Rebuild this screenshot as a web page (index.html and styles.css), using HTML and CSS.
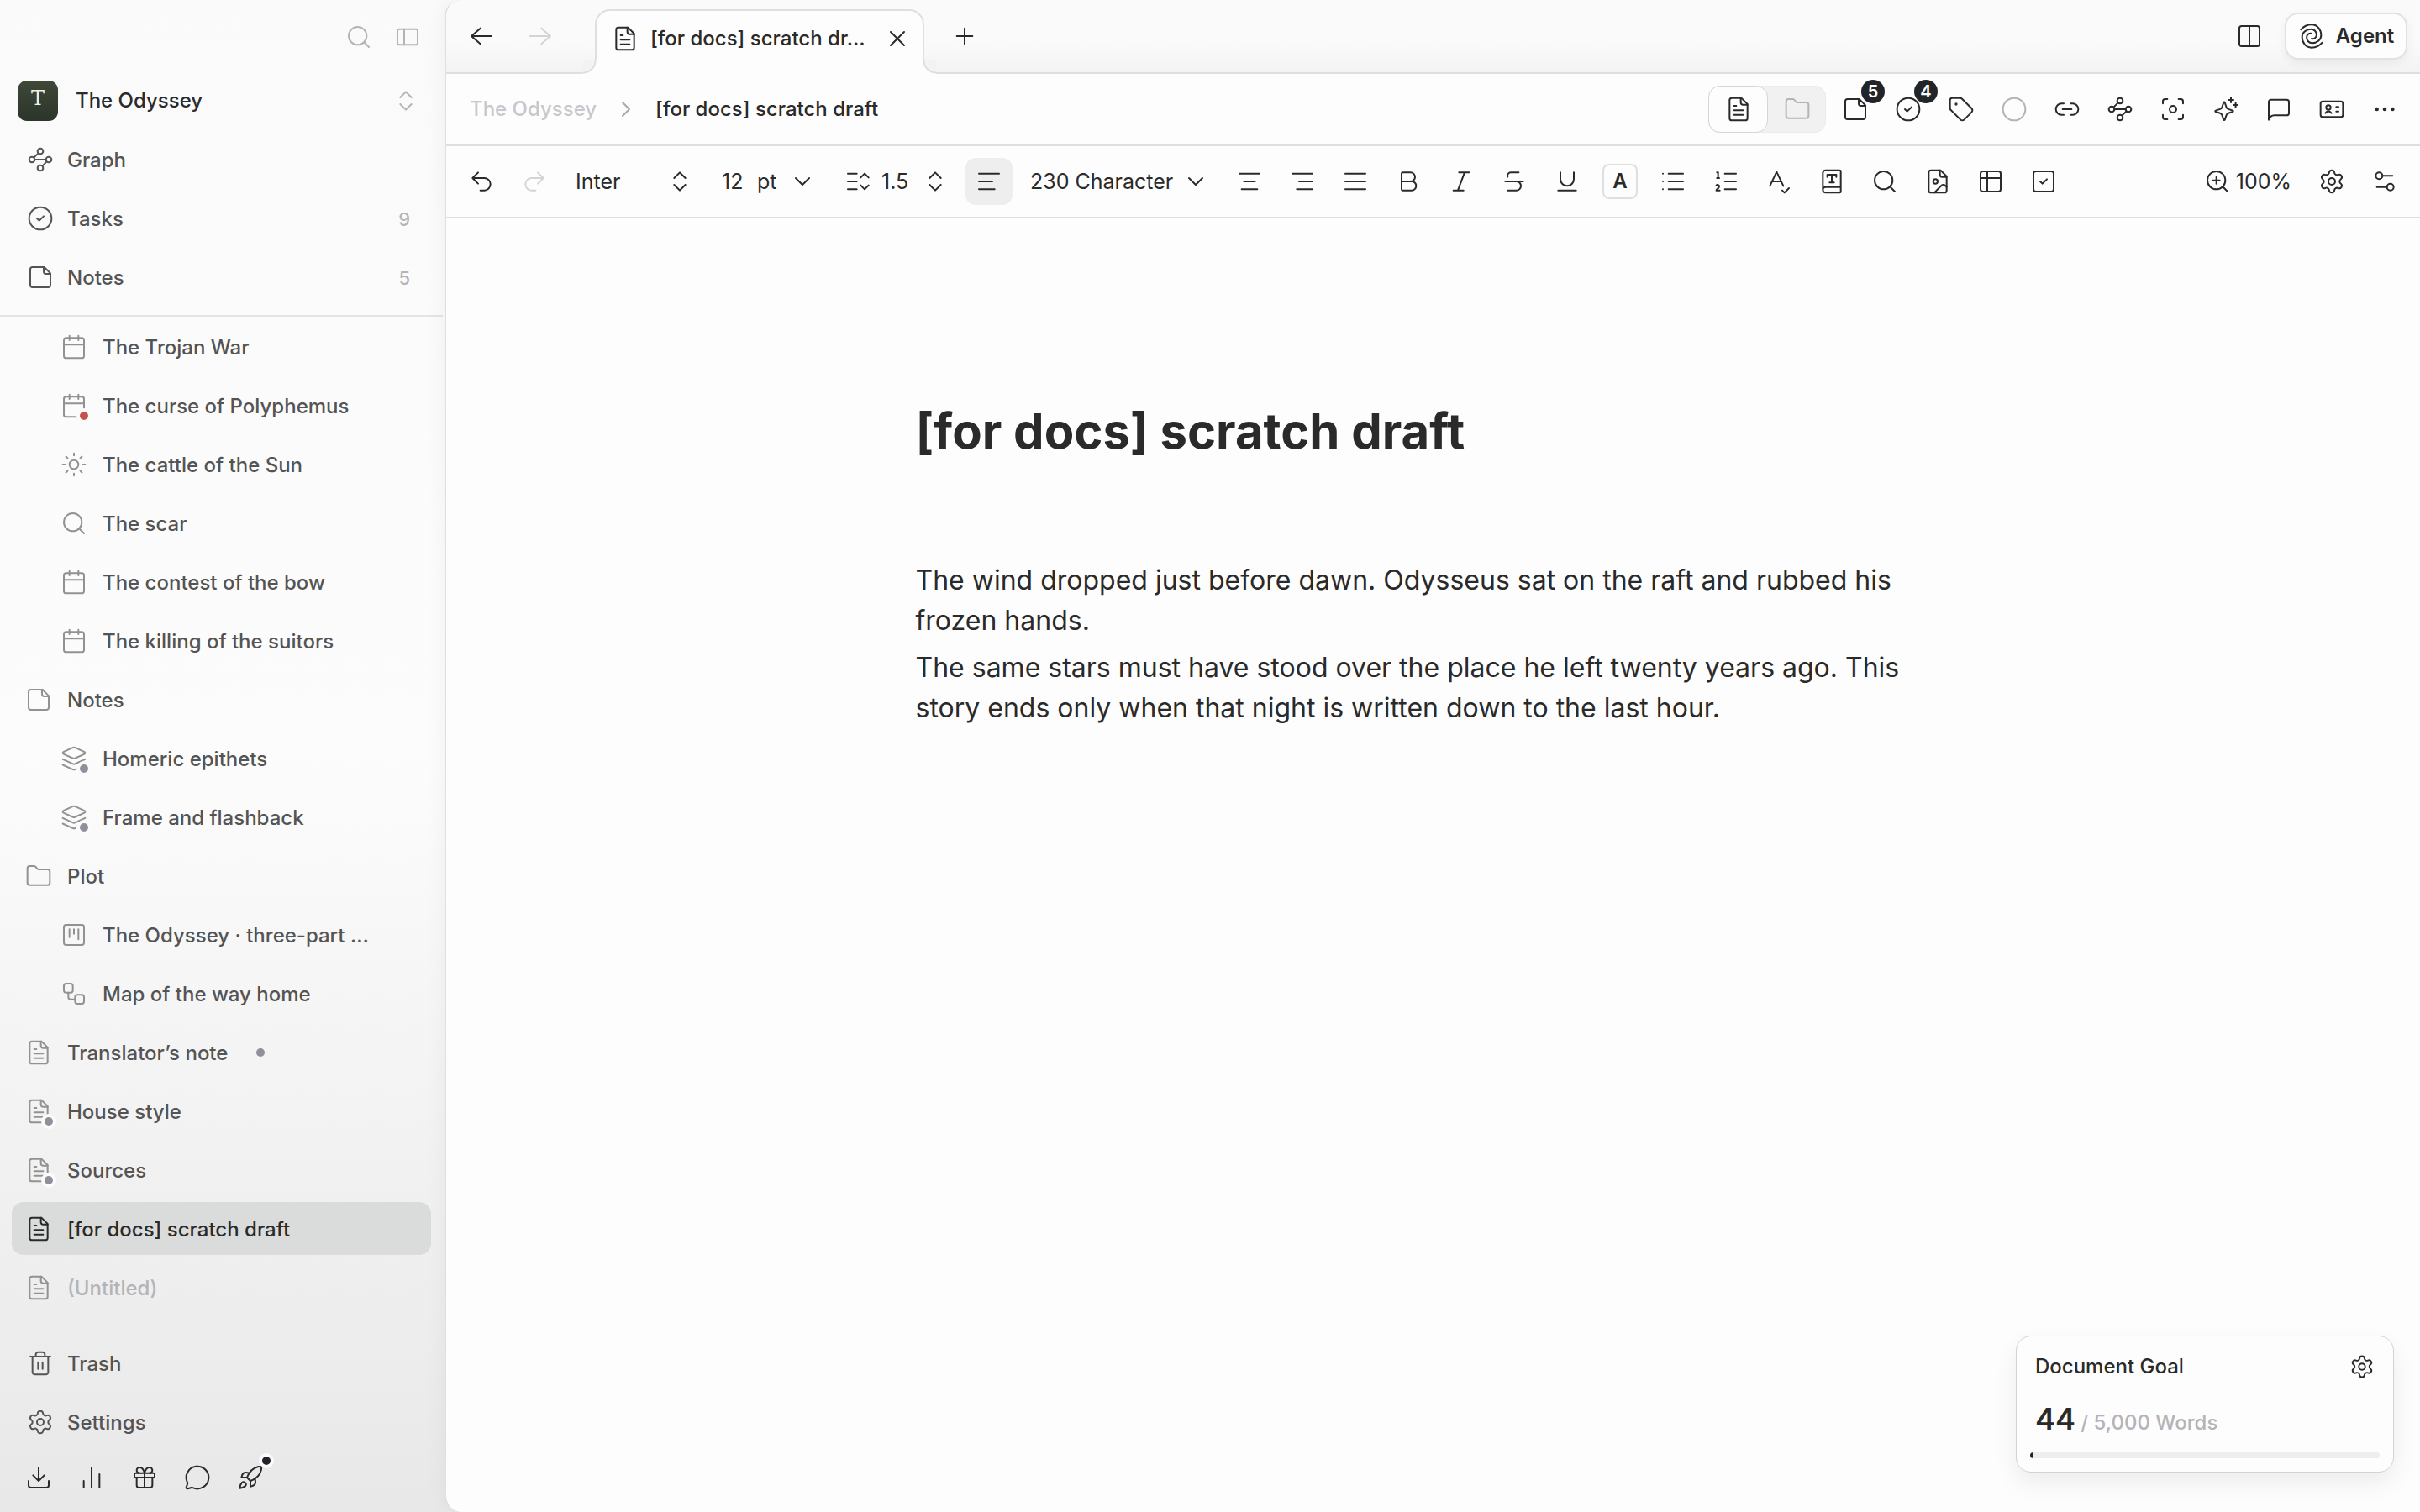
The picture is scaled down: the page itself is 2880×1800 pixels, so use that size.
FILE: index.html
```html
<!DOCTYPE html>
<html lang="en">
<head>
  <meta charset="UTF-8" />
  <meta name="viewport" content="width=device-width, initial-scale=1" />
  <title>[for docs] scratch draft</title>
  <link rel="stylesheet" href="styles.css">
</head>
<body>

<!-- icon sprite, 24px grid -->
<svg class="sprite" aria-hidden="true">
  <symbol id="i-search" viewBox="0 0 24 24"><circle cx="11" cy="11" r="8"/><path d="m21 21-4.3-4.3"/></symbol>
  <symbol id="i-sidebar" viewBox="0 0 24 24"><rect x="3" y="5" width="18" height="14" rx="1.5"/><path d="M9 5v14"/></symbol>
  <symbol id="i-updown" viewBox="0 0 24 24"><path d="m7 15 5 5 5-5M7 9l5-5 5 5"/></symbol>
  <symbol id="i-down" viewBox="0 0 24 24"><path d="m6 9 6 6 6-6"/></symbol>
  <symbol id="i-right" viewBox="0 0 24 24"><path d="m9 18 6-6-6-6"/></symbol>
  <symbol id="i-graph" viewBox="0 0 24 24"><circle cx="12" cy="4.5" r="2.5"/><path d="m10.2 6.3-3.9 3.9"/><circle cx="4.5" cy="12" r="2.5"/><path d="M7 12h10"/><circle cx="19.5" cy="12" r="2.5"/><path d="m13.8 17.7 3.9-3.9"/><circle cx="12" cy="19.5" r="2.5"/></symbol>
  <symbol id="i-task" viewBox="0 0 24 24"><circle cx="12" cy="12" r="10"/><path d="m9 12 2 2 4-4"/></symbol>
  <symbol id="i-note" viewBox="0 0 24 24"><path d="M15.5 3H5a2 2 0 0 0-2 2v14a2 2 0 0 0 2 2h14a2 2 0 0 0 2-2V8.500Z"/><path d="M15 3v4a2 2 0 0 0 2 2h4"/></symbol>
  <symbol id="i-calendar" viewBox="0 0 24 24"><path d="M8 2v4M16 2v4"/><rect x="3" y="4" width="18" height="18" rx="2"/><path d="M3 10h18"/></symbol>
  <symbol id="i-sun" viewBox="0 0 24 24"><circle cx="12" cy="12" r="4"/><path d="M12 2v2M12 20v2M4.930 4.930l1.410 1.410M17.660 17.660l1.410 1.410M2 12h2M20 12h2M6.340 17.660l-1.410 1.410M19.070 4.930l-1.410 1.410"/></symbol>
  <symbol id="i-layers" viewBox="0 0 24 24"><path d="M12.830 2.180a2 2 0 0 0-1.660 0L2.600 6.080a1 1 0 0 0 0 1.830l8.580 3.910a2 2 0 0 0 1.660 0l8.580-3.900a1 1 0 0 0 0-1.830Z"/><path d="m22 17.650-9.170 4.160a2 2 0 0 1-1.660 0L2 17.650M22 12.650l-9.170 4.160a2 2 0 0 1-1.660 0L2 12.650"/></symbol>
  <symbol id="i-folder" viewBox="0 0 24 24"><path d="M20 20a2 2 0 0 0 2-2V8a2 2 0 0 0-2-2h-7.900a2 2 0 0 1-1.690-.9L9.600 3.900A2 2 0 0 0 7.930 3H4a2 2 0 0 0-2 2v13a2 2 0 0 0 2 2Z"/></symbol>
  <symbol id="i-kanban" viewBox="0 0 24 24"><rect x="3" y="3" width="18" height="18" rx="2"/><path d="M8 7v7M12 7v4M16 7v9"/></symbol>
  <symbol id="i-flow" viewBox="0 0 24 24"><rect x="3" y="3" width="8" height="8" rx="2"/><path d="M7 11v4a2 2 0 0 0 2 2h4"/><rect x="13" y="13" width="8" height="8" rx="2"/></symbol>
  <symbol id="i-doc" viewBox="0 0 24 24"><path d="M14.500 2H6a2 2 0 0 0-2 2v16a2 2 0 0 0 2 2h12a2 2 0 0 0 2-2V7.500Z"/><path d="M14 2v4a2 2 0 0 0 2 2h4M10 9H8M16 13H8M16 17H8"/></symbol>
  <symbol id="i-trash" viewBox="0 0 24 24"><path d="M3 6h18M19 6v14c0 1-1 2-2 2H7c-1 0-2-1-2-2V6M8 6V4c0-1 1-2 2-2h4c1 0 2 1 2 2v2M10 11v6M14 11v6"/></symbol>
  <symbol id="i-gear" viewBox="0 0 24 24"><path d="M9.671 4.136a2.340 2.340 0 0 1 4.659 0 2.340 2.340 0 0 0 3.319 1.915 2.340 2.340 0 0 1 2.330 4.033 2.340 2.340 0 0 0 0 3.831 2.340 2.340 0 0 1-2.330 4.033 2.340 2.340 0 0 0-3.319 1.915 2.340 2.340 0 0 1-4.659 0 2.340 2.340 0 0 0-3.320-1.915 2.340 2.340 0 0 1-2.330-4.033 2.340 2.340 0 0 0 0-3.831A2.340 2.340 0 0 1 6.350 6.051a2.340 2.340 0 0 0 3.319-1.915"/><circle cx="12" cy="12" r="3"/></symbol>
  <symbol id="i-download" viewBox="0 0 24 24"><path d="M12 15V3M21 15v4a2 2 0 0 1-2 2H5a2 2 0 0 1-2-2v-4M7 10l5 5 5-5"/></symbol>
  <symbol id="i-bars" viewBox="0 0 24 24"><path d="M5 21v-6M12 21V3M19 21V9"/></symbol>
  <symbol id="i-gift" viewBox="0 0 24 24"><rect x="3" y="8" width="18" height="4" rx="1"/><path d="M12 8v13M19 12v7a2 2 0 0 1-2 2H7a2 2 0 0 1-2-2v-7M7.500 8a2.500 2.500 0 0 1 0-5A4.800 8 0 0 1 12 8a4.800 8 0 0 1 4.500-5 2.500 2.500 0 0 1 0 5"/></symbol>
  <symbol id="i-chat" viewBox="0 0 24 24"><path d="M2.992 16.342a2 2 0 0 1 .094 1.167l-1.065 3.290a1 1 0 0 0 1.236 1.168l3.413-.998a2 2 0 0 1 1.099.092 10 10 0 1 0-4.777-4.719"/></symbol>
  <symbol id="i-rocket" viewBox="0 0 24 24"><path d="M4.500 16.500c-1.500 1.260-2 5-2 5s3.740-.5 5-2c.71-.84.7-2.130-.09-2.910a2.180 2.180 0 0 0-2.910-.09z"/><path d="m12 15-3-3a22 22 0 0 1 2-3.950A12.880 12.880 0 0 1 22 2c0 2.720-.78 7.500-6 11a22.350 22.350 0 0 1-4 2z"/><path d="M9 12H4s.55-3.030 2-4c1.620-1.080 5 0 5 0M12 15v5s3.030-.55 4-2c1.080-1.620 0-5 0-5"/></symbol>
  <symbol id="i-back" viewBox="0 0 24 24"><path d="M21 12H3M11 5l-8 7 8 7"/></symbol>
  <symbol id="i-forward" viewBox="0 0 24 24"><path d="M3 12h18M13 5l8 7-8 7"/></symbol>
  <symbol id="i-close" viewBox="0 0 24 24"><path d="M18 6 6 18M6 6l12 12"/></symbol>
  <symbol id="i-plus" viewBox="0 0 24 24"><path d="M5 12h14M12 5v14"/></symbol>
  <symbol id="i-columns" viewBox="0 0 24 24"><rect x="3" y="3" width="18" height="18" rx="2"/><path d="M12 3v18"/></symbol>
  <symbol id="i-spiral" viewBox="0 0 24 24"><path d="M2.500 6.200C5 3.200 8.500 1.750 12 1.750c5.500 0 8.500 4.750 8.500 9.500 0 4.250-4 6.950-8 6.950-3 0-4.900-2.400-4.900-5.100 0-2.400 2-3.900 4.400-3.400"/><path d="M21.500 17.800C19 20.800 15.500 22.250 12 22.250c-5.500 0-8.500-4.750-8.500-9.500 0-4.250 4-6.950 8-6.950 3 0 4.900 2.400 4.900 5.100 0 2.400-2 3.900-4.400 3.400"/></symbol>
  <symbol id="i-tag" viewBox="0 0 24 24"><path d="M12.586 2.586A2 2 0 0 0 11.172 2H4a2 2 0 0 0-2 2v7.172a2 2 0 0 0 .586 1.414l8.704 8.704a2.426 2.426 0 0 0 3.420 0l6.580-6.580a2.426 2.426 0 0 0 0-3.420z"/><circle cx="7.500" cy="7.500" r=".5"/></symbol>
  <symbol id="i-circle" viewBox="0 0 24 24"><circle cx="12" cy="12" r="10"/></symbol>
  <symbol id="i-link" viewBox="0 0 24 24"><path d="M9 17H7A5 5 0 0 1 7 7h2M15 7h2a5 5 0 1 1 0 10h-2M8 12h8"/></symbol>
  <symbol id="i-focus" viewBox="0 0 24 24"><circle cx="12" cy="12" r="3"/><path d="M3 7V5a2 2 0 0 1 2-2h2M17 3h2a2 2 0 0 1 2 2v2M21 17v2a2 2 0 0 1-2 2h-2M7 21H5a2 2 0 0 1-2-2v-2"/></symbol>
  <symbol id="i-sparkle" viewBox="0 0 24 24"><path d="M10.500 5.700c.3 0 .5.200.6.500l1.300 3.900c.3.900.9 1.500 1.800 1.800l3.900 1.300c.6.200.6.900 0 1.100l-3.900 1.300c-.9.300-1.500.9-1.800 1.800l-1.300 3.900c-.2.600-1 .6-1.200 0l-1.300-3.900c-.3-.9-.9-1.500-1.800-1.800l-3.900-1.300c-.6-.2-.6-.9 0-1.100l3.900-1.300c.9-.3 1.500-.9 1.800-1.800l1.300-3.900c.1-.3.300-.5.6-.5Z"/><path d="M16.500 1.500v4.500M14.250 3.750h4.500M20.700 6.500v3.600M18.900 8.300h3.600"/></symbol>
  <symbol id="i-comment" viewBox="0 0 24 24"><path d="M21 15.500a2 2 0 0 1-2 2H8c-2.500 0-4 1-5 4V5.500a2 2 0 0 1 2-2h14a2 2 0 0 1 2 2Z"/></symbol>
  <symbol id="i-card" viewBox="0 0 24 24"><rect x="2" y="5" width="20" height="14" rx="2"/><circle cx="9" cy="10.500" r="2"/><path d="M16 10h2M16 14h2M6.300 15.500a3 3 0 0 1 5.400 0"/></symbol>
  <symbol id="i-dots" viewBox="0 0 24 24"><circle cx="5" cy="12" r="1"/><circle cx="12" cy="12" r="1"/><circle cx="19" cy="12" r="1"/></symbol>
  <symbol id="i-undo" viewBox="0 0 24 24"><path d="M9 14 4 9l5-5M4 9h10.500a5.500 5.500 0 0 1 0 11H11"/></symbol>
  <symbol id="i-redo" viewBox="0 0 24 24"><path d="m15 14 5-5-5-5M20 9H9.500a5.500 5.500 0 0 0 0 11H13"/></symbol>
  <symbol id="i-leading" viewBox="0 0 24 24"><path d="M3 5h8M3 12h8M3 19h8M14.500 8.500 18 5l3.500 3.500M14.500 15.500 18 19l3.500-3.500"/></symbol>
  <symbol id="i-left" viewBox="0 0 24 24"><path d="M3 5h18M3 12h12M3 19h14"/></symbol>
  <symbol id="i-center" viewBox="0 0 24 24"><path d="M3 5h18M7 12h10M5 19h14"/></symbol>
  <symbol id="i-alignright" viewBox="0 0 24 24"><path d="M3 5h18M9 12h12M7 19h14"/></symbol>
  <symbol id="i-justify" viewBox="0 0 24 24"><path d="M3 5h18M3 12h18M3 19h18"/></symbol>
  <symbol id="i-bold" viewBox="0 0 24 24"><path d="M6 12h9a4 4 0 0 1 0 8H7a1 1 0 0 1-1-1V5a1 1 0 0 1 1-1h7a4 4 0 0 1 0 8"/></symbol>
  <symbol id="i-italic" viewBox="0 0 24 24"><path d="M19 4h-9M14 20H5M15 4 9 20"/></symbol>
  <symbol id="i-strike" viewBox="0 0 24 24"><path d="M16 4H9a3 3 0 0 0-2.830 4M14 12a4 4 0 0 1 0 8H6M4 12h16"/></symbol>
  <symbol id="i-underline" viewBox="0 0 24 24"><path d="M6 4v6a6 6 0 0 0 12 0V4M4 20h16"/></symbol>
  <symbol id="i-list" viewBox="0 0 24 24"><path d="M8 5h13M8 12h13M8 19h13M3 5h.01M3 12h.01M3 19h.01"/></symbol>
  <symbol id="i-numbered" viewBox="0 0 24 24"><path d="M11 5h10M11 12h10M11 19h10M4 4h1v5M4 9h2M6.500 20H3.400c0-1 2.600-1.925 2.600-3.500a1.500 1.500 0 0 0-2.600-1.020"/></symbol>
  <symbol id="i-spell" viewBox="0 0 24 24"><path d="m4 16 6-12.500L16 16M6 12h8M15 20l2 2 4-4"/></symbol>
  <symbol id="i-book" viewBox="0 0 24 24"><path d="M10 13h4M12 6v7M16 8V6H8v2M4 19.500v-15A2.500 2.500 0 0 1 6.500 2H19a1 1 0 0 1 1 1v18a1 1 0 0 1-1 1H6.500a1 1 0 0 1 0-5H20"/></symbol>
  <symbol id="i-image" viewBox="0 0 24 24"><path d="M14.500 2H6a2 2 0 0 0-2 2v16a2 2 0 0 0 2 2h12a2 2 0 0 0 2-2V7.500Z"/><path d="M14 2v4a2 2 0 0 0 2 2h4M20 17l-1.296-1.296a2.410 2.410 0 0 0-3.408 0L9 22"/><circle cx="10" cy="12" r="2"/></symbol>
  <symbol id="i-table" viewBox="0 0 24 24"><rect x="3" y="3" width="18" height="18" rx="2"/><path d="M9 3v18M3 9h18"/></symbol>
  <symbol id="i-check" viewBox="0 0 24 24"><rect x="3" y="3" width="18" height="18" rx="2"/><path d="m9 12 2 2 4-4"/></symbol>
  <symbol id="i-zoom" viewBox="0 0 24 24"><circle cx="11" cy="11" r="8"/><path d="m21 21-4.300-4.300M11 8v6M8 11h6"/></symbol>
  <symbol id="i-sliders" viewBox="0 0 24 24"><path d="M14 17H5M19 7h-9"/><circle cx="17" cy="17" r="3"/><circle cx="7" cy="7" r="3"/></symbol>
</svg>

<div class="app">
  <aside class="sidebar">
    <div class="sidebar-top">
      <button class="icon-btn" aria-label="Search"><svg class="icon"><use href="#i-search"/></svg></button>
      <button class="icon-btn" aria-label="Toggle sidebar"><svg class="icon"><use href="#i-sidebar"/></svg></button>
    </div>

    <button class="workspace">
      <span class="avatar">T</span>
      <span class="workspace-name">The Odyssey</span>
      <svg class="icon"><use href="#i-updown"/></svg>
    </button>

    <nav class="nav">
      <a class="item" href="#graph"><svg class="icon"><use href="#i-graph"/></svg><span>Graph</span></a>
      <a class="item" href="#tasks"><svg class="icon"><use href="#i-task"/></svg><span>Tasks</span><span class="count">9</span></a>
      <a class="item" href="#notes"><svg class="icon"><use href="#i-note"/></svg><span>Notes</span><span class="count">5</span></a>
    </nav>

    <nav class="tree">
      <a class="item child" href="#doc"><span class="mark"><svg class="icon"><use href="#i-calendar"/></svg></span><span>The Trojan War</span></a>
      <a class="item child" href="#doc"><span class="mark red"><svg class="icon"><use href="#i-calendar"/></svg></span><span>The curse of Polyphemus</span></a>
      <a class="item child" href="#doc"><span class="mark"><svg class="icon"><use href="#i-sun"/></svg></span><span>The cattle of the Sun</span></a>
      <a class="item child" href="#doc"><span class="mark"><svg class="icon"><use href="#i-search"/></svg></span><span>The scar</span></a>
      <a class="item child" href="#doc"><span class="mark"><svg class="icon"><use href="#i-calendar"/></svg></span><span>The contest of the bow</span></a>
      <a class="item child" href="#doc"><span class="mark"><svg class="icon"><use href="#i-calendar"/></svg></span><span>The killing of the suitors</span></a>
      <a class="item" href="#doc"><span class="mark"><svg class="icon"><use href="#i-note"/></svg></span><span>Notes</span></a>
      <a class="item child" href="#doc"><span class="mark grey"><svg class="icon"><use href="#i-layers"/></svg></span><span>Homeric epithets</span></a>
      <a class="item child" href="#doc"><span class="mark grey"><svg class="icon"><use href="#i-layers"/></svg></span><span>Frame and flashback</span></a>
      <a class="item" href="#doc"><span class="mark"><svg class="icon"><use href="#i-folder"/></svg></span><span>Plot</span></a>
      <a class="item child" href="#doc"><span class="mark"><svg class="icon"><use href="#i-kanban"/></svg></span><span>The Odyssey · three-part …</span></a>
      <a class="item child" href="#doc"><span class="mark"><svg class="icon"><use href="#i-flow"/></svg></span><span>Map of the way home</span></a>
      <a class="item" href="#doc"><span class="mark"><svg class="icon"><use href="#i-doc"/></svg></span><span>Translator’s note</span><i class="dot"></i></a>
      <a class="item" href="#doc"><span class="mark grey"><svg class="icon"><use href="#i-doc"/></svg></span><span>House style</span></a>
      <a class="item" href="#doc"><span class="mark grey"><svg class="icon"><use href="#i-doc"/></svg></span><span>Sources</span></a>
      <a class="item active" href="#doc"><span class="mark"><svg class="icon"><use href="#i-doc"/></svg></span><span>[for docs] scratch draft</span></a>
      <a class="item untitled" href="#doc"><span class="mark"><svg class="icon"><use href="#i-doc"/></svg></span><span>(Untitled)</span></a>
    </nav>

    <div class="sidebar-foot">
      <a class="item" href="#trash"><svg class="icon"><use href="#i-trash"/></svg><span>Trash</span></a>
      <a class="item" href="#settings"><svg class="icon"><use href="#i-gear"/></svg><span>Settings</span></a>
      <div class="foot-icons">
        <button class="icon-btn" aria-label="Download"><svg class="icon"><use href="#i-download"/></svg></button>
        <button class="icon-btn" aria-label="Statistics"><svg class="icon"><use href="#i-bars"/></svg></button>
        <button class="icon-btn" aria-label="Gift"><svg class="icon"><use href="#i-gift"/></svg></button>
        <button class="icon-btn" aria-label="Chat"><svg class="icon"><use href="#i-chat"/></svg></button>
        <button class="icon-btn has-news" aria-label="What's new"><svg class="icon"><use href="#i-rocket"/></svg></button>
      </div>
    </div>
  </aside>

  <main class="panel">
    <div class="tabbar">
      <div class="history">
        <button class="icon-btn" aria-label="Back"><svg class="icon"><use href="#i-back"/></svg></button>
        <button class="icon-btn faded" aria-label="Forward" disabled><svg class="icon"><use href="#i-forward"/></svg></button>
      </div>
      <div class="tab">
        <svg class="icon"><use href="#i-doc"/></svg>
        <span class="tab-title">[for docs] scratch dr…</span>
        <button class="tab-close" aria-label="Close tab"><svg class="icon"><use href="#i-close"/></svg></button>
      </div>
      <button class="icon-btn new-tab" aria-label="New tab"><svg class="icon"><use href="#i-plus"/></svg></button>
      <div class="tabbar-right">
        <button class="icon-btn" aria-label="Split view"><svg class="icon"><use href="#i-columns"/></svg></button>
        <button class="agent"><svg class="icon"><use href="#i-spiral"/></svg>Agent</button>
      </div>
    </div>

    <div class="bar">
      <div class="crumbs">
        <a href="#odyssey">The Odyssey</a>
        <svg class="icon"><use href="#i-right"/></svg>
        <strong>[for docs] scratch draft</strong>
      </div>
      <div class="group">
        <div class="switch">
          <button class="on" aria-label="Document"><svg class="icon"><use href="#i-doc"/></svg></button>
          <button aria-label="Folder"><svg class="icon"><use href="#i-folder"/></svg></button>
        </div>
        <button class="icon-btn" aria-label="Notes"><svg class="icon"><use href="#i-note"/></svg><span class="badge">5</span></button>
        <button class="icon-btn" aria-label="Tasks"><svg class="icon"><use href="#i-task"/></svg><span class="badge">4</span></button>
        <button class="icon-btn" aria-label="Tags"><svg class="icon"><use href="#i-tag"/></svg></button>
        <button class="icon-btn muted" aria-label="Status"><svg class="icon"><use href="#i-circle"/></svg></button>
        <button class="icon-btn" aria-label="Links"><svg class="icon"><use href="#i-link"/></svg></button>
        <button class="icon-btn" aria-label="Graph"><svg class="icon"><use href="#i-graph"/></svg></button>
        <button class="icon-btn" aria-label="Focus"><svg class="icon"><use href="#i-focus"/></svg></button>
        <button class="icon-btn" aria-label="Assist"><svg class="icon"><use href="#i-sparkle"/></svg></button>
        <button class="icon-btn" aria-label="Comments"><svg class="icon"><use href="#i-comment"/></svg></button>
        <button class="icon-btn" aria-label="Card"><svg class="icon"><use href="#i-card"/></svg></button>
        <button class="icon-btn filled" aria-label="More"><svg class="icon"><use href="#i-dots"/></svg></button>
      </div>
    </div>

    <div class="bar">
      <div class="group">
        <button class="icon-btn" aria-label="Undo"><svg class="icon"><use href="#i-undo"/></svg></button>
        <button class="icon-btn faded" aria-label="Redo" disabled><svg class="icon"><use href="#i-redo"/></svg></button>
        <div class="field">
          <select class="font-select" aria-label="Font"><option>Inter</option></select>
          <svg class="icon"><use href="#i-updown"/></svg>
        </div>
        <div class="field">
          <input class="size-input" type="text" value="12" aria-label="Font size">
          <select class="unit-select" aria-label="Unit"><option>pt</option></select>
          <svg class="icon"><use href="#i-down"/></svg>
        </div>
        <div class="field">
          <svg class="icon leading"><use href="#i-leading"/></svg>
          <input class="leading-input" type="text" value="1.5" aria-label="Line height">
          <svg class="icon"><use href="#i-updown"/></svg>
        </div>
        <button class="icon-btn pressed" aria-label="Align left"><svg class="icon"><use href="#i-left"/></svg></button>
        <div class="field">
          <select class="style-select" aria-label="Style"><option>230 Character</option></select>
          <svg class="icon"><use href="#i-down"/></svg>
        </div>
        <button class="icon-btn" aria-label="Align center"><svg class="icon"><use href="#i-center"/></svg></button>
        <button class="icon-btn" aria-label="Align right"><svg class="icon"><use href="#i-alignright"/></svg></button>
        <button class="icon-btn" aria-label="Justify"><svg class="icon"><use href="#i-justify"/></svg></button>
        <button class="icon-btn" aria-label="Bold"><svg class="icon"><use href="#i-bold"/></svg></button>
        <button class="icon-btn" aria-label="Italic"><svg class="icon"><use href="#i-italic"/></svg></button>
        <button class="icon-btn" aria-label="Strikethrough"><svg class="icon"><use href="#i-strike"/></svg></button>
        <button class="icon-btn" aria-label="Underline"><svg class="icon"><use href="#i-underline"/></svg></button>
        <button class="icon-btn" aria-label="Text color"><span class="letter">A</span></button>
        <button class="icon-btn" aria-label="Bulleted list"><svg class="icon"><use href="#i-list"/></svg></button>
        <button class="icon-btn" aria-label="Numbered list"><svg class="icon"><use href="#i-numbered"/></svg></button>
        <button class="icon-btn" aria-label="Spelling"><svg class="icon"><use href="#i-spell"/></svg></button>
        <button class="icon-btn" aria-label="Dictionary"><svg class="icon"><use href="#i-book"/></svg></button>
        <button class="icon-btn" aria-label="Find"><svg class="icon"><use href="#i-search"/></svg></button>
        <button class="icon-btn" aria-label="Insert image"><svg class="icon"><use href="#i-image"/></svg></button>
        <button class="icon-btn" aria-label="Insert table"><svg class="icon"><use href="#i-table"/></svg></button>
        <button class="icon-btn" aria-label="Insert checkbox"><svg class="icon"><use href="#i-check"/></svg></button>
      </div>
      <div class="group">
        <button class="zoom"><svg class="icon"><use href="#i-zoom"/></svg>100%</button>
        <button class="icon-btn" aria-label="Editor settings"><svg class="icon"><use href="#i-gear"/></svg></button>
        <button class="icon-btn" aria-label="Customize toolbar"><svg class="icon"><use href="#i-sliders"/></svg></button>
      </div>
    </div>

    <article class="page">
      <h1>[for docs] scratch draft</h1>
      <p>The wind dropped just before dawn. Odysseus sat on the raft and rubbed his frozen hands.</p>
      <p>The same stars must have stood over the place he left twenty years ago. This story ends only when that night is written down to the last hour.</p>
    </article>
  </main>

  <section class="goal">
    <div class="goal-head">
      <h2>Document Goal</h2>
      <button aria-label="Goal settings"><svg class="icon"><use href="#i-gear"/></svg></button>
    </div>
    <div class="goal-count"><b>44</b> / 5,000 Words</div>
    <div class="goal-track"><div class="goal-fill" style="width: 0.88%"></div></div>
  </section>
</div>

</body>
</html>
```
FILE: styles.css
```css
:root {
  --text: #2a2a2a;
  --text-soft: #545454;
  --muted: #b4b4b8;
  --line: #dfdfdf;
  --paper: #fdfdfd;
  --dark: #212529;
}

*,
*::before,
*::after {
  box-sizing: border-box;
}

body {
  margin: 0;
  font-family: Inter, "Noto Sans", sans-serif;
  font-size: 24px;
  font-weight: 500;
  line-height: 32px;
  color: var(--text);
  background: #e8e8e8;
}

button,
input,
select {
  font: inherit;
  color: inherit;
  background: none;
  border: none;
  padding: 0;
  margin: 0;
  outline: none;
  appearance: none;
}

button {
  cursor: pointer;
}

a {
  color: inherit;
  text-decoration: none;
}

.sprite {
  display: none;
}

.icon {
  display: block;
  flex: none;
  width: 32px;
  height: 32px;
  fill: none;
  stroke: currentColor;
  stroke-width: 1.5;
  stroke-linecap: round;
  stroke-linejoin: round;
}

.icon-btn {
  position: relative;
  display: flex;
  flex: none;
  align-items: center;
  justify-content: center;
  width: 56px;
  height: 56px;
  border-radius: 12px;
}

.icon-btn.faded { color: #d4d4d4; }
.icon-btn.muted { color: var(--muted); }
.icon-btn.pressed { background: #eeeeee; }
.icon-btn.filled .icon { fill: currentColor; }

.app {
  display: grid;
  grid-template-columns: 529px 1fr;
  height: 100vh;
  overflow: hidden;
  background: linear-gradient(to bottom, #fafafa, #fcfcfc 50%, #e8e8e8);
}

/* sidebar */

.sidebar {
  display: flex;
  flex-direction: column;
  min-height: 0;
  color: var(--text-soft);
}

.sidebar-top {
  display: flex;
  flex: none;
  align-items: center;
  justify-content: flex-end;
  gap: 2px;
  height: 88px;
  padding-right: 16px;
  color: var(--muted);
}

.workspace {
  display: flex;
  flex: none;
  align-items: center;
  height: 63px;
  padding: 0 30px 0 21px;
  color: var(--muted);
  text-align: left;
}

.avatar {
  width: 48px;
  height: 48px;
  border-radius: 11px;
  background: linear-gradient(to bottom, #3f4737, #2c352b);
  color: #f3eee2;
  font: 24px/42px "DejaVu Serif", serif;
  text-align: center;
}

.workspace-name {
  flex: 1;
  margin-left: 21px;
  color: var(--text);
}

.nav,
.tree,
.sidebar-foot {
  display: flex;
  flex-direction: column;
  gap: 7px;
}

.nav {
  margin-right: 2px;
  padding: 7px 14px 14px;
  border-bottom: 2px solid #e4e4e4;
}

.tree {
  flex: 1;
  min-height: 0;
  overflow: hidden;
  padding: 4px 16px 0 14px;
}

.item {
  display: flex;
  flex: none;
  align-items: center;
  gap: 16px;
  height: 63px;
  padding: 0 25px 0 18px;
  border-radius: 14px;
  white-space: nowrap;
}

.item > span {
  padding-top: 2px;
}

.tree .item {
  gap: 18px;
  padding-left: 16px;
}

.tree .child {
  padding-left: 58px;
}

.count {
  margin-left: auto;
  font-size: 22px;
  color: var(--muted);
}

.item > .mark {
  position: relative;
  padding: 0;
  color: #929292;
}

/* status dot in the corner of an icon */
.mark.red::after,
.mark.grey::after,
.has-news::after {
  content: "";
  position: absolute;
  right: -5px;
  bottom: -5px;
  width: 18px;
  height: 18px;
  border: 4px solid #fbfbfb;
  border-radius: 50%;
  background: #8e9199;
}

.mark.red::after {
  background: #c5534c;
}

.has-news::after {
  top: -1px;
  right: 0;
  bottom: auto;
  background: var(--dark);
}

.dot {
  width: 10px;
  height: 10px;
  margin-left: 16px;
  border-radius: 50%;
  background: #8e9199;
}

.item.active {
  background: #dadcdb;
  color: var(--text);
}

.item.active .mark {
  color: var(--text);
}

.item.untitled {
  color: var(--muted);
}

.sidebar-foot {
  padding: 0 16px 14px 14px;
}

.foot-icons {
  display: flex;
  gap: 7px;
  padding-left: 4px;
  color: var(--text);
}

.foot-icons .icon-btn {
  height: 55px;
}

/* main panel */

.panel {
  min-width: 0;
  overflow: hidden;
  border-left: 2px solid var(--line);
  border-radius: 20px 0 0 20px;
  background: var(--paper);
  box-shadow: 0 0 24px rgba(0, 0, 0, 0.05);
}

.tabbar {
  display: flex;
  height: 88px;
  padding: 0 15px 0 14px;
  border-bottom: 2px solid var(--line);
  background: linear-gradient(to bottom, #fafafa 60%, #f3f3f3);
}

.history,
.tabbar-right {
  display: flex;
  align-items: center;
  gap: 14px;
}

.tabbar-right {
  margin-left: auto;
}

.tab {
  position: relative;
  display: flex;
  align-items: center;
  gap: 14px;
  width: 392px;
  margin: 11px 0 -2px 37px;
  padding: 0 14px 9px 18px;
  border: 2px solid var(--line);
  border-bottom: none;
  border-radius: 18px 18px 0 0;
  background: var(--paper);
}

/* flared feet of the tab */
.tab::before,
.tab::after {
  content: "";
  position: absolute;
  bottom: 0;
  left: -16px;
  width: 16px;
  height: 16px;
  background: radial-gradient(circle at 0 0, #f3f3f3 13px, var(--line) 14px, var(--line) 15px, var(--paper) 16px);
}

.tab::after {
  left: auto;
  right: -16px;
  background: radial-gradient(circle at 100% 0, #f3f3f3 13px, var(--line) 14px, var(--line) 15px, var(--paper) 16px);
}

.tab-title {
  flex: 1;
  white-space: nowrap;
}

.new-tab {
  align-self: center;
  margin-left: 20px;
}

.agent {
  display: flex;
  align-items: center;
  justify-content: center;
  gap: 13px;
  width: 146px;
  height: 56px;
  border: 2px solid #e2e2e2;
  border-radius: 16px;
  background: var(--paper);
  font-weight: 600;
  box-shadow: 0 4px 12px rgba(0, 0, 0, 0.06);
}

.bar {
  display: flex;
  align-items: center;
  justify-content: space-between;
  height: 86px;
  padding: 0 14px;
  border-bottom: 2px solid var(--line);
}

.crumbs {
  display: flex;
  align-items: center;
  gap: 19px;
  padding-left: 14px;
  color: #a8a8ac;
}

.crumbs a {
  color: #c8c8cc;
}

.crumbs strong {
  font-weight: 500;
  color: var(--text);
}

.group {
  display: flex;
  align-items: center;
  gap: 7px;
}

.switch {
  display: flex;
  height: 56px;
  border-radius: 14px;
  background: #f1f1f1;
  box-shadow: inset 0 0 0 1px #ebebeb;
}

.switch button {
  display: flex;
  align-items: center;
  justify-content: center;
  width: 69px;
  color: var(--muted);
}

.switch .on {
  width: 71px;
  border: 1px solid #d6d6d6;
  border-radius: 14px;
  background: var(--paper);
  color: var(--text);
}

.badge {
  position: absolute;
  top: -7px;
  right: -7px;
  width: 28px;
  height: 28px;
  border-radius: 50%;
  background: var(--dark);
  color: #fff;
  font-size: 20px;
  font-weight: 600;
  line-height: 28px;
  text-align: center;
}

.field,
.zoom {
  display: flex;
  align-items: center;
  padding: 0 13px 0 14px;
  font-size: 25px;
  font-weight: 400;
}

.zoom {
  gap: 6px;
}

.font-select { width: 108px; }
.size-input { width: 42px; }
.unit-select { width: 38px; }
.leading-input { width: 48px; }
.style-select { width: 181px; }

.leading {
  margin-right: 12px;
}

.letter {
  width: 42px;
  height: 42px;
  border: 2px solid var(--line);
  border-radius: 8px;
  font-weight: 600;
  line-height: 38px;
}

/* document */

.page {
  width: 100%;
  max-width: 1232px;
  margin: 0 auto;
  padding-top: 214px;
  font-size: 32px;
  font-weight: 400;
  line-height: 48px;
}

.page h1 {
  margin: 0 0 115px;
  font-size: 58px;
  font-weight: 700;
  line-height: 78px;
}

.page p {
  margin: 0 0 8px;
}

.goal {
  position: absolute;
  right: 31px;
  bottom: 47px;
  width: 450px;
  padding: 20px 16px 16px;
  border: 1px solid #d3d3d6;
  border-radius: 18px;
  background: var(--paper);
  box-shadow: 0 12px 28px rgba(0, 0, 0, 0.07);
}

.goal-head {
  display: flex;
  align-items: center;
  justify-content: space-between;
  padding: 0 6px;
}

.goal h2 {
  margin: 0;
  font-size: 24px;
  font-weight: 500;
}

.goal .icon {
  width: 30px;
  height: 30px;
}

.goal-count {
  margin: 24px 0 18px;
  padding: 0 6px;
  color: var(--muted);
}

.goal-count b {
  font-size: 36px;
  font-weight: 600;
  line-height: 44px;
  color: var(--text);
}

.goal-track {
  height: 7px;
  border-radius: 4px;
  background: #eeeeee;
  overflow: hidden;
}

.goal-fill {
  height: 100%;
  border-radius: 4px;
  background: var(--dark);
}
```
